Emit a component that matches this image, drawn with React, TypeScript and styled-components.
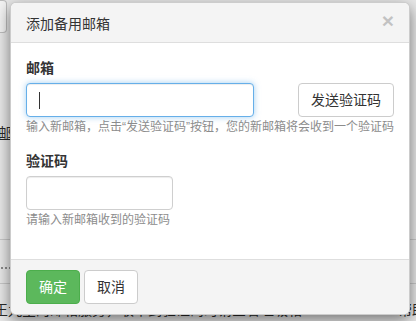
import { type FC } from 'react'
import styled, { createGlobalStyle } from 'styled-components'

const GlobalStyle = createGlobalStyle`
  html, body {
    margin: 0;
    padding: 0;
    background: #e9e9e9;
  }

  body {
    font-family: "Liberation Sans", "Noto Sans CJK SC", sans-serif;
    font-size: 14px;
    color: #333;
  }

  * {
    box-sizing: border-box;
  }
`

const Page = styled.div`
  height: 321px;
  overflow: hidden;
  position: relative;
`

/* the page that lies behind the dialog */
const Behind = styled.div`
  display: flex;
  flex-direction: column;
  color: #2a2a2a;
`

const TopBox = styled.div`
  width: 7px;
  height: 33px;
  background: #f3f3f3;
  border: 1px solid #bdbdbd;
  border-left: none;
  border-radius: 0 4px 4px 0;
`

const BehindLink = styled.span`
  margin: 90px 0 0 -2px;
  line-height: 20px;
  text-decoration: underline;
  white-space: nowrap;
`

const Rule = styled.div<{ $top: number }>`
  margin-top: ${(p) => p.$top}px;
  height: 1px;
  background: #c9c9c9;
`

const Dots = styled.div`
  margin-top: 25px;
  height: 6px;
  width: 12px;
  background: radial-gradient(circle, #8a8a8a 1px, transparent 1.5px) 0 0 / 4px 6px repeat-x;
`

const BehindText = styled.div`
  display: flex;
  justify-content: space-between;
  margin: 16px -10px 0 -6px;
  line-height: 20px;
  white-space: nowrap;
`

const Dialog = styled.div`
  position: absolute;
  top: 2px;
  left: 10px;
  width: 400px;
  background: #fff;
  border: 1px solid rgba(0, 0, 0, 0.2);
  border-radius: 6px;
  box-shadow: 0 5px 15px rgba(0, 0, 0, 0.5);
  overflow: hidden;
`

const Header = styled.div`
  display: flex;
  align-items: center;
  justify-content: space-between;
  height: 40px;
  padding: 0 15px;
  background: #f4f4f4;
  border-bottom: 1px solid #dedede;
`

const Title = styled.h4`
  margin: 0;
  font-size: 14px;
  font-weight: normal;
  color: #333;
`

const Close = styled.button`
  padding: 0;
  border: none;
  background: none;
  font-family: "Liberation Sans", sans-serif;
  font-size: 21px;
  font-weight: bold;
  line-height: 1;
  color: #000;
  opacity: 0.2;
  margin-top: -4px;
`

const Body = styled.div`
  padding: 15px;
`

const Group = styled.div`
  margin-bottom: 15px;
`

const Label = styled.label`
  display: block;
  margin-bottom: 5px;
  font-weight: bold;
  line-height: 20px;
  color: #333;
`

const Row = styled.div`
  display: flex;
  align-items: flex-start;
  justify-content: space-between;
`

const Field = styled.div`
  position: relative;
`

const Input = styled.input<{ $width: number; $focused?: boolean }>`
  display: block;
  width: ${(p) => p.$width}px;
  height: 34px;
  padding: 6px 12px;
  font: inherit;
  color: #555;
  background: #fff;
  border: 1px solid ${(p) => (p.$focused ? '#66afe9' : '#cfcfcf')};
  border-radius: 4px;
  outline: none;
  box-shadow: ${(p) =>
    p.$focused
      ? 'inset 0 1px 1px rgba(0,0,0,.075), 0 0 6px rgba(102,175,233,.6)'
      : 'inset 0 1px 1px rgba(0,0,0,.075)'};
`

const Caret = styled.span`
  position: absolute;
  left: 13px;
  top: 9px;
  width: 1px;
  height: 17px;
  background: #333;
`

const Help = styled.p`
  margin: 2px 0 0;
  font-size: 12px;
  line-height: 17px;
  color: #8c8c8c;
  white-space: nowrap;
`

const Button = styled.button<{ $variant?: 'primary' | 'default' }>`
  height: 34px;
  padding: 6px 12px;
  font: inherit;
  line-height: 20px;
  border-radius: 4px;
  border: 1px solid ${(p) => (p.$variant === 'primary' ? '#4cae4c' : '#ccc')};
  background: ${(p) => (p.$variant === 'primary' ? '#5cb85c' : '#fff')};
  color: ${(p) => (p.$variant === 'primary' ? '#fff' : '#333')};
  cursor: pointer;
`

const Footer = styled.div`
  display: flex;
  gap: 4px;
  padding: 10px 15px;
  background: #f4f4f4;
  border-top: 1px solid #dedede;
`

const App: FC = () => (
  <Page>
    <GlobalStyle />
    <Behind>
      <TopBox />
      <BehindLink>邮</BehindLink>
      <Rule $top={96} />
      <Dots />
      <Rule $top={12} />
      <BehindText>
        <span>王九星的邮箱服务，收不到验证码时请查看垃圾箱</span>
        <span>帮助</span>
      </BehindText>
    </Behind>

    <Dialog>
      <Header>
        <Title>添加备用邮箱</Title>
        <Close>×</Close>
      </Header>
      <Body>
        <Group>
          <Label>邮箱</Label>
          <Row>
            <Field>
              <Input $width={228} $focused />
              <Caret />
            </Field>
            <Button>发送验证码</Button>
          </Row>
          <Help>输入新邮箱，点击“发送验证码”按钮，您的新邮箱将会收到一个验证码</Help>
        </Group>
        <Group>
          <Label>验证码</Label>
          <Input $width={147} />
          <Help>请输入新邮箱收到的验证码</Help>
        </Group>
      </Body>
      <Footer>
        <Button $variant="primary">确定</Button>
        <Button>取消</Button>
      </Footer>
    </Dialog>
  </Page>
)

export default App
